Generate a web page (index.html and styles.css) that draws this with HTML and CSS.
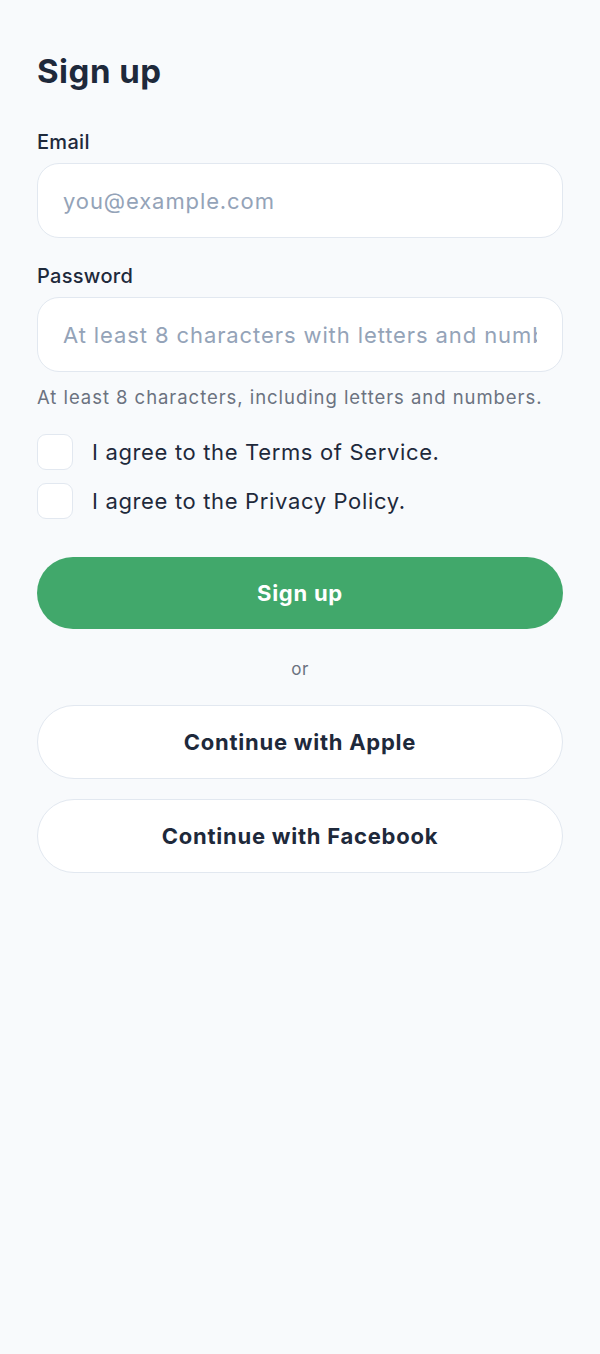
FILE: index.html
```html
<!DOCTYPE html>
<html lang="en">
<head>
<meta charset="utf-8">
<title>Sign up</title>
<link rel="stylesheet" href="styles.css">
</head>
<body>
<main class="page">
  <h1 class="title">Sign up</h1>
  <form class="form">
    <div class="field">
      <label class="label" for="email">Email</label>
      <input class="input" id="email" type="email" placeholder="you@example.com">
    </div>
    <div class="field field-pw">
      <label class="label" for="pw">Password</label>
      <input class="input" id="pw" type="password" placeholder="At least 8 characters with letters and numbers">
      <p class="hint">At least 8 characters, including letters and numbers.</p>
    </div>
    <div class="checks">
      <label class="check"><span class="box"></span><span class="check-text">I agree to the Terms of Service.</span></label>
      <label class="check"><span class="box"></span><span class="check-text">I agree to the Privacy Policy.</span></label>
    </div>
    <button type="button" class="btn btn-primary">Sign up</button>
    <p class="or">or</p>
    <div class="social">
      <button type="button" class="btn btn-outline">Continue with Apple</button>
      <button type="button" class="btn btn-outline">Continue with Facebook</button>
    </div>
  </form>
</main>
</body>
</html>
```
FILE: styles.css
```css
* { box-sizing: border-box; }
html, body { margin: 0; padding: 0; }
body {
  background: #f8fafc;
  font-family: "Inter", "Noto Sans", sans-serif;
  color: #1e293b;
  min-height: 1354px;
}
.page {
  padding: 50px 37px 0;
}
.title {
  margin: 0;
  font-size: 33px;
  line-height: 42px;
  font-weight: 700;
  color: #1e293b;
  letter-spacing: 0.5px;
}
.form {
  display: flex;
  flex-direction: column;
  margin-top: 37px;
}
.field {
  display: flex;
  flex-direction: column;
}
.field-pw { margin-top: 25px; }
.label {
  font-size: 20px;
  line-height: 26px;
  font-weight: 500;
  color: #1e293b;
  margin-bottom: 8px;
  letter-spacing: 0.3px;
}
.input {
  height: 75px;
  width: 100%;
  border: 1px solid #e2e8f0;
  border-radius: 22px;
  background: #fff;
  padding: 0 25px;
  font-family: inherit;
  font-size: 22px;
  letter-spacing: 0.9px;
  color: #1e293b;
  outline: none;
}
.input::placeholder { color: #94a3b8; }
.hint {
  margin: 13px 0 0;
  font-size: 18.5px;
  line-height: 24px;
  letter-spacing: 0.95px;
  color: #6b7280;
}
.checks {
  display: flex;
  flex-direction: column;
  gap: 13px;
  margin-top: 25px;
}
.check {
  display: flex;
  align-items: center;
  gap: 19px;
}
.box {
  width: 36px;
  height: 36px;
  border: 1px solid #e2e8f0;
  border-radius: 9px;
  background: #fff;
  flex: none;
}
.check-text {
  font-size: 22px;
  letter-spacing: 0.65px;
  color: #1e293b;
}
.btn {
  width: 100%;
  border-radius: 999px;
  font-family: inherit;
  font-size: 22px;
  font-weight: 700;
  letter-spacing: 0.75px;
  cursor: pointer;
}
.btn-primary {
  margin-top: 38px;
  height: 72px;
  border: none;
  background: #41a86b;
  color: #fff;
}
.or {
  margin: 28px 0 0;
  text-align: center;
  font-size: 17px;
  line-height: 24px;
  letter-spacing: 0.4px;
  color: #6b7280;
}
.social {
  display: flex;
  flex-direction: column;
  gap: 20px;
  margin-top: 24px;
}
.btn-outline {
  height: 74px;
  background: #fff;
  border: 1px solid #e2e8f0;
  color: #1e293b;
}
```
